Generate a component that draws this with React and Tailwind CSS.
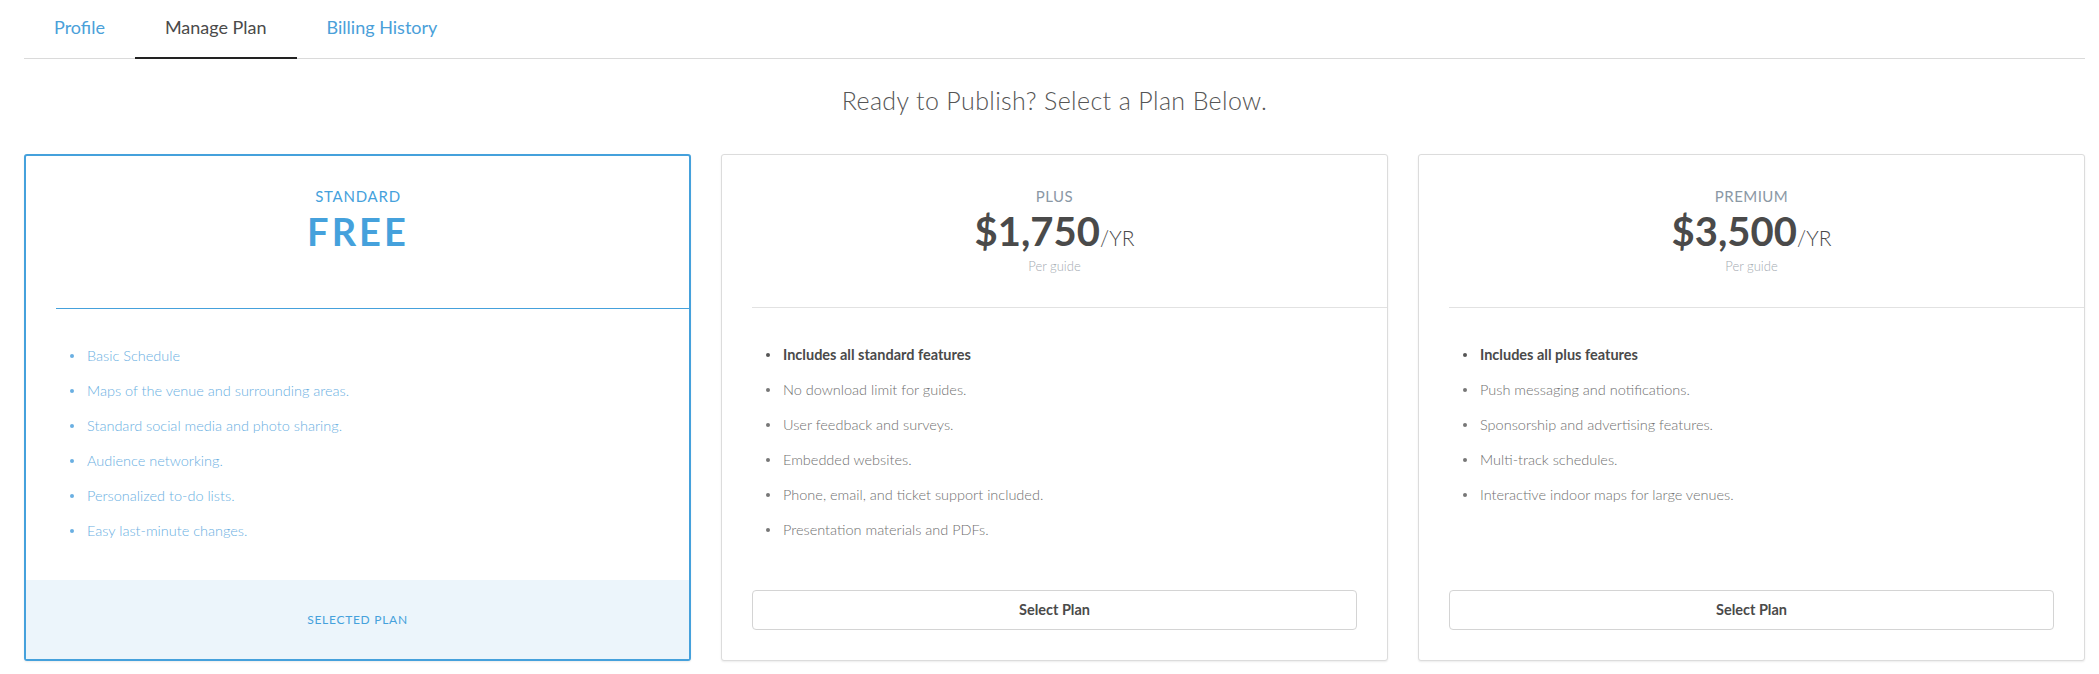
import { useState } from "react";

const plans = [
  {
    id: "standard",
    name: "STANDARD",
    price: "FREE",
    features: [
      "Basic Schedule",
      "Maps of the venue and surrounding areas.",
      "Standard social media and photo sharing.",
      "Audience networking.",
      "Personalized to-do lists.",
      "Easy last-minute changes.",
    ],
  },
  {
    id: "plus",
    name: "PLUS",
    price: "$1,750",
    lead: "Includes all standard features",
    features: [
      "No download limit for guides.",
      "User feedback and surveys.",
      "Embedded websites.",
      "Phone, email, and ticket support included.",
      "Presentation materials and PDFs.",
    ],
  },
  {
    id: "premium",
    name: "PREMIUM",
    price: "$3,500",
    lead: "Includes all plus features",
    features: [
      "Push messaging and notifications.",
      "Sponsorship and advertising features.",
      "Multi-track schedules.",
      "Interactive indoor maps for large venues.",
    ],
  },
];

const tabs = ["Profile", "Manage Plan", "Billing History"];

function PlanCard({ plan, selected, onSelect }) {
  if (selected) {
    return (
      <div className="h-[507px] flex flex-col border-2 border-[#45a1dc] rounded-[3px] bg-white shadow-[0_1px_2px_rgba(0,0,0,0.08)]">
        <div className="h-[153px] pt-[30px] text-center border-b border-[#45a1dc] ml-[30px] -mr-px">
          <div className="text-[15px] leading-[20px] tracking-[0.05em] text-[#45a1dc] -ml-[30px]">
            {plan.name}
          </div>
          <div className="mt-[3px] text-[38px] leading-[44px] font-bold tracking-[0.08em] text-[#45a1dc] -ml-[30px]">
            {plan.price}
          </div>
        </div>

        <ul className="pt-[37px] pl-[44px] flex flex-col gap-[15px]">
          {plan.features.map((f) => (
            <li key={f} className="flex items-center text-[14.5px] leading-[20px] font-light text-[#6aafe2]">
              <span className="w-[4px] h-[4px] rounded-full bg-[#6aafe2] mr-[13px]" />
              {f}
            </li>
          ))}
        </ul>

        <div className="mt-auto h-[79px] bg-[#ecf5fb] flex items-center justify-center text-[12px] tracking-[0.06em] text-[#45a1dc]">
          SELECTED PLAN
        </div>
      </div>
    );
  }

  return (
    <div className="h-[507px] flex flex-col border border-[#dcdcdc] rounded-[3px] bg-white shadow-[0_1px_2px_rgba(0,0,0,0.08)]">
      <div className="h-[153px] pt-[31px] text-center border-b border-[#e2e2e2] ml-[30px]">
        <div className="text-[15px] leading-[20px] tracking-[0.03em] text-[#8b98a5] -ml-[30px]">
          {plan.name}
        </div>
        <div className="mt-[3px] leading-[44px] text-[#4a4a4a] -ml-[30px]">
          <span className="text-[40px] font-bold">{plan.price}</span>
          <span className="text-[21px] font-light">/YR</span>
        </div>
        <div className="-mt-[5px] text-[13px] leading-[18px] font-light text-[#a4abb2] -ml-[30px]">
          Per guide
        </div>
      </div>

      <ul className="pt-[37px] pl-[44px] flex flex-col gap-[15px]">
        <li className="flex items-center text-[14.5px] leading-[20px] font-bold text-[#4a4a4a]">
          <span className="w-[4px] h-[4px] rounded-full bg-[#555] mr-[13px]" />
          {plan.lead}
        </li>
        {plan.features.map((f) => (
          <li key={f} className="flex items-center text-[14.5px] leading-[20px] font-light text-[#707070]">
            <span className="w-[4px] h-[4px] rounded-full bg-[#777] mr-[13px]" />
            {f}
          </li>
        ))}
      </ul>

      <div className="mt-auto px-[30px] pb-[30px]">
        <button
          onClick={onSelect}
          className="w-full h-[40px] border border-[#d4d4d4] rounded-[4px] bg-white text-[14.5px] font-bold text-[#4a4a4a]"
        >
          Select Plan
        </button>
      </div>
    </div>
  );
}

export default function App() {
  const [active, setActive] = useState("Manage Plan");
  const [selected, setSelected] = useState("standard");

  return (
    <div className="min-h-screen bg-white pl-[24px] pr-[14px] font-['Lato',sans-serif]">
      <div className="flex border-b border-[#dadada]">
        {tabs.map((t) => (
          <button
            key={t}
            onClick={() => setActive(t)}
            className={
              t === active
                ? "px-[30px] pt-[15px] pb-[18px] leading-[24px] text-[18px] text-[#4a4a4a] border-b-2 border-[#222] -mb-px"
                : "px-[30px] pt-[15px] pb-[18px] leading-[24px] text-[18px] text-[#4aa0d9] border-b-2 border-transparent -mb-px"
            }
          >
            {t}
          </button>
        ))}
      </div>

      <h1 className="mt-[26px] mb-[39px] text-center text-[25px] leading-[30px] font-light tracking-[0.015em] text-[#555]">
        Ready to Publish? Select a Plan Below.
      </h1>

      <div className="grid grid-cols-3 gap-[30px]">
        {plans.map((p) => (
          <PlanCard
            key={p.id}
            plan={p}
            selected={selected === p.id}
            onSelect={() => setSelected(p.id)}
          />
        ))}
      </div>
    </div>
  );
}
